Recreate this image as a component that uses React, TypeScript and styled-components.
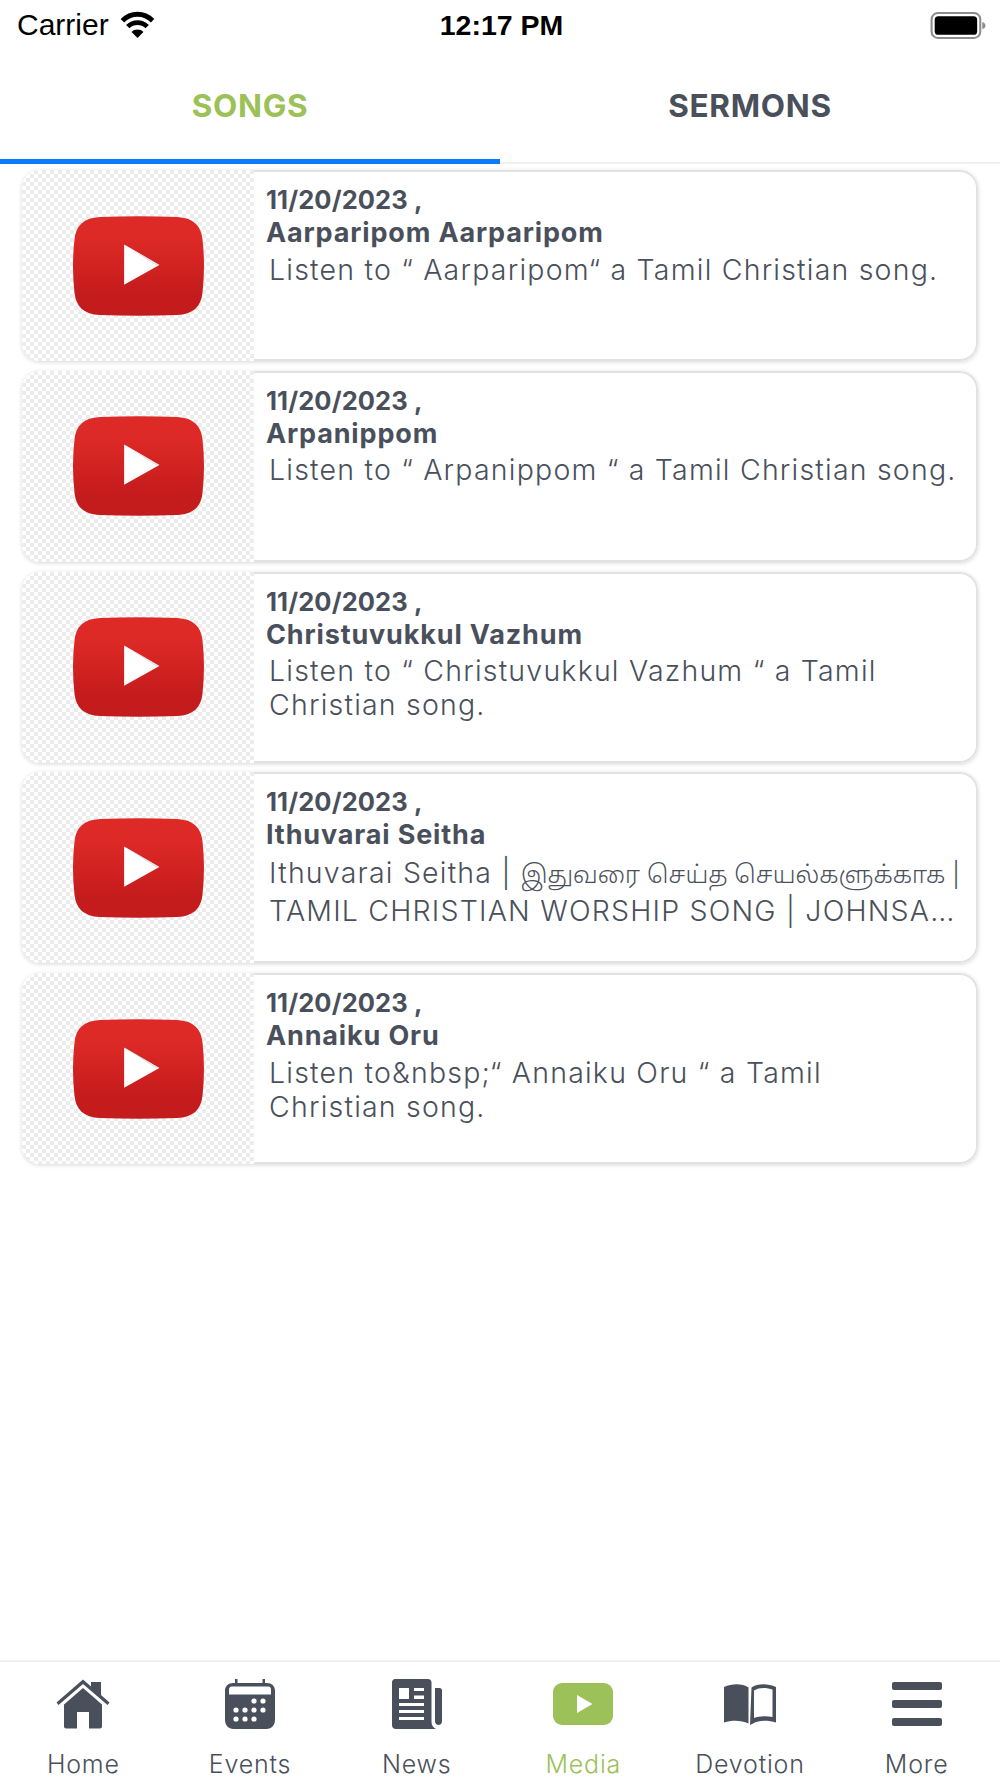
import React from "react";
import styled, { createGlobalStyle } from "styled-components";

const Global = createGlobalStyle`
  html, body { margin: 0; padding: 0; background: #fff; }
  * { box-sizing: border-box; }
`;
const FONT = `Inter, "Noto Sans", "Noto Sans Tamil", sans-serif`;
const INK = "#4a505b";
const GREEN = "#9bc158";

const Page = styled.div`
  width: 1000px; height: 1778px; display: flex; flex-direction: column; background: #fff; font-family: ${FONT}; color: ${INK}; overflow: hidden;
`;
const StatusBar = styled.div`
  height: 50px; flex: none; display: grid; grid-template-columns: 1fr auto 1fr; align-items: center; padding: 0 14px 0 17px; font-family: "Liberation Sans", Arial, sans-serif; color: #000; font-size: 30px;
`;
const Carrier = styled.div`display: flex; align-items: center; gap: 11px;`;
const Clock = styled.div`font-weight: 700; font-size: 28.500px; font-family: "Liberation Sans", Arial, sans-serif;`;
const BatteryWrap = styled.div`display: flex; justify-content: flex-end;`;

const Tabs = styled.div`
  height: 114px; flex: none; display: grid; grid-template-columns: 1fr 1fr; border-bottom: 2px solid #f0f0f0;
`;
const Tab = styled.div<{ $active?: boolean }>`
  display: flex; align-items: center; justify-content: center; padding-top: 2px; font-size: 31.500px; font-weight: 700; letter-spacing: .7px; height: 114px;
  color: ${p => (p.$active ? GREEN : INK)};
  border-bottom: 5px solid ${p => (p.$active ? "#0a7aff" : "transparent")};
`;
const List = styled.div`
  flex: 1; display: flex; flex-direction: column; gap: 9.750px; padding: 6px 22px 0 22px;
`;
const Card = styled.div`
  height: 191px; flex: none; display: flex; border-radius: 18px; background: #fff; overflow: hidden;
  box-shadow: 0 1px 4px rgba(0,0,0,.16);
`;
const Thumb = styled.div`
  width: 232px; flex: none; display: flex; align-items: center; justify-content: center;
  background-color: #fff;
  background-image: repeating-conic-gradient(#ececec 0% 25%, #fff 0% 50%);
  background-size: 8px 8px;
`;
const Body = styled.div`
  flex: 1; min-width: 0; padding: 11px 10px 0 12px; display: flex; flex-direction: column;
  border: 2px solid #e2e2e2; border-left: none; border-radius: 0 18px 18px 0;
`;
const DateLine = styled.div`font-size: 25.500px; font-weight: 700; line-height: 33px; letter-spacing: .1px; white-space: nowrap;`;
const Title = styled.div`font-size: 27px; font-weight: 700; line-height: 33px; letter-spacing: .85px; white-space: nowrap;`;
const Description = styled.div`
  font-size: 28.500px; font-weight: 300; line-height: 34px; letter-spacing: 1.200px; margin: 3.500px 0 0 3px; color: ${INK};
  display: -webkit-box; -webkit-line-clamp: 2; -webkit-box-orient: vertical; overflow: hidden;
`;
const Tamil = styled.span`font-size: 24.400px; letter-spacing: 0; line-height: 39px;`;
const KeepTogether = styled.span`white-space: nowrap;`;
const Nav = styled.div`
  height: 118px; flex: none; border-top: 2px solid #f0f0f0; display: grid; grid-template-columns: repeat(6, 1fr);
`;
const NavItem = styled.div<{ $active?: boolean }>`
  display: flex; flex-direction: column; align-items: center; color: ${p => (p.$active ? GREEN : INK)}; font-size: 25px; font-weight: 300; letter-spacing: .8px; line-height: 30px; white-space: nowrap;
`;
const NavIcon = styled.div`height: 66px; margin-top: 9px; margin-bottom: 12px; display: flex; align-items: center; justify-content: center;`;

const YouTube = () => (
  <svg width="133" height="100" viewBox="0 0 134 102" preserveAspectRatio="none">
    <defs>
      <linearGradient id="yt" x1="0" y1="0" x2="0" y2="1">
        <stop offset="0.2" stopColor="#de2a27" />
        <stop offset="0.8" stopColor="#c41b1c" />
      </linearGradient>
    </defs>
    <path d="M28 1C54 0 80 0 106 1C122 2 130 9 131.500 24C133.500 42 133.500 60 131.500 78C130 93 122 100 106 101C80 102 54 102 28 101C12 100 4 93 2.500 78C.5 60 .5 42 2.500 24C4 9 12 2 28 1Z" fill="url(#yt)" />
    <path d="M52.500 29L88 50L52.500 70Z" fill="#fff" />
    <path d="M52.500 29L88 50L84 50Z" fill="#e3e3e3" />
  </svg>
);
const Wifi = () => (
  <svg width="35" height="28" viewBox="0 0 32 26" fill="none" stroke="#000" strokeWidth="4.500">
    <path d="M2 9C10 1 22 1 30 9" />
    <path d="M7 14.500C12 9.500 20 9.500 25 14.500" />
    <path d="M16 25L10.500 19.500C13.500 16.500 18.500 16.500 21.500 19.500Z" fill="#000" stroke="none" />
  </svg>
);
const Battery = () => (
  <svg width="56" height="29" viewBox="0 0 54 28">
    <rect x="1.500" y="2" width="47" height="24" rx="6" fill="#fff" stroke="#8c8c8c" strokeWidth="2" />
    <rect x="4.500" y="5" width="41" height="18" rx="3.500" fill="#000" />
    <path d="M50.500 10.500C52.500 11 53.500 12.500 53.500 14C53.500 15.500 52.500 17 50.500 17.500Z" fill="#8c8c8c" />
  </svg>
);
const HomeIcon = () => (
  <svg width="54" height="50" viewBox="0 0 54 50" fill={INK}>
    <path d="M27 0.500L35 7.500V3H45V16L53.500 23.500L51.500 26L27 5L2.500 26L.5 23.500Z" />
    <path d="M27 9L46 25.500V47.500C46 48.800 45 49.500 44 49.500H33V33H21V49.500H10C9 49.500 8 48.800 8 47.500V25.500Z" />
  </svg>
);
const CalendarIcon = () => (
  <svg width="50" height="50" viewBox="0 0 50 50" fill={INK}>
    <path fillRule="evenodd" d="M10 0h2.500v4h25V0H40v4h2c4.500 0 8 3 8 7.500V41c0 5-3.500 9-8.500 9h-33C3.500 50 0 46 0 41V11.500C0 7 3.500 4 8 4h2ZM7 7.500C4.500 7.500 4 9 4 11v4.500h42V11c0-2-.5-3.500-3-3.500Z" />
    <g fill="#fff">
      <circle cx="29" cy="22" r="2.600" /><circle cx="38" cy="22" r="2.600" />
      <circle cx="11" cy="31" r="2.600" /><circle cx="20" cy="31" r="2.600" /><circle cx="29" cy="31" r="2.600" /><circle cx="38" cy="31" r="2.600" />
      <circle cx="11" cy="40" r="2.600" /><circle cx="20" cy="40" r="2.600" /><circle cx="29" cy="40" r="2.600" />
    </g>
  </svg>
);
const NewsIcon = () => (
  <svg width="50" height="50" viewBox="0 0 50 50" fill={INK}>
    <path fillRule="evenodd" d="M3 0H36C38 0 39.500 1.500 39.500 3.500V43C39.500 46 41 48.500 44 50H4C1.500 50 0 48.500 0 46V3C0 1.500 1.500 0 3 0ZM7 9V20H17V9ZM22 9V12H32V9ZM22 16.500V20H32V16.500ZM7 24V27H32V24ZM7 31V34H32V31ZM7 38V41H32V38Z" />
    <path d="M43 9H47.500C49 9 50 10 50 11.500V42C50 44.500 48.500 46 46.500 46C44.500 46 43 44.500 43 42Z" />
  </svg>
);
const MediaIcon = () => (
  <svg width="60" height="42" viewBox="0 0 60 42">
    <rect width="60" height="42" rx="9" fill={GREEN} />
    <path d="M24 12L39.500 21L24 30Z" fill="#fff" />
  </svg>
);
const BookIcon = () => (
  <svg width="52" height="42" viewBox="0 0 52 42" fill={INK}>
    <path fillRule="evenodd" d="M24.500 4.500V40.500C17 37 8 37 0 39.500V4C8 0.500 18 0 24.500 4.500ZM27.500 4.500C34 0 44 0.500 52 4V39.500C44 37 35 37 29 40.500L26 42ZM30 7.500V35C35 33 42 32.500 48.500 34V6.500C43 4.500 35 4 30 7.500Z" />
  </svg>
);
const MenuIcon = () => (
  <svg width="50" height="44" viewBox="0 0 50 44" fill={INK}>
    <rect width="50" height="8" rx="2" y="0" /><rect width="50" height="8" rx="2" y="18" /><rect width="50" height="8" rx="2" y="36" />
  </svg>
);

const songs: [string, React.ReactNode][] = [
  ["Aarparipom Aarparipom", "Listen to “ Aarparipom“ a Tamil Christian song."],
  ["Arpanippom", "Listen to “ Arpanippom “ a Tamil Christian song."],
  ["Christuvukkul Vazhum", "Listen to “ Christuvukkul Vazhum “ a Tamil Christian song."],
  ["Ithuvarai Seitha", <>Ithuvarai Seitha | <Tamil>இதுவரை செய்த செயல்களுக்காக |</Tamil> TAMIL CHRISTIAN WORSHIP SONG | JOHNSAM JOYSON | FGPC NAGERCOIL</>],
  ["Annaiku Oru", <>Listen to&amp;nbsp;“ Annaiku Oru “ a Tamil <KeepTogether>Christian song.</KeepTogether></>],
];
const navItems = [
  { label: "Home", icon: <HomeIcon /> },
  { label: "Events", icon: <CalendarIcon /> },
  { label: "News", icon: <NewsIcon /> },
  { label: "Media", icon: <MediaIcon />, active: true },
  { label: "Devotion", icon: <BookIcon /> },
  { label: "More", icon: <MenuIcon /> },
];

export default function App() {
  return (
    <Page>
      <Global />
      <StatusBar>
        <Carrier>Carrier <Wifi /></Carrier>
        <Clock>12:17 PM</Clock>
        <BatteryWrap><Battery /></BatteryWrap>
      </StatusBar>
      <Tabs>
        <Tab $active>SONGS</Tab>
        <Tab>SERMONS</Tab>
      </Tabs>
      <List>
        {songs.map(([title, desc]) => (
          <Card key={title}>
            <Thumb><YouTube /></Thumb>
            <Body>
              <DateLine>11/20/2023 ,</DateLine>
              <Title>{title}</Title>
              <Description>{desc}</Description>
            </Body>
          </Card>
        ))}
      </List>
      <Nav>
        {navItems.map(n => (
          <NavItem key={n.label} $active={n.active}>
            <NavIcon>{n.icon}</NavIcon>
            {n.label}
          </NavItem>
        ))}
      </Nav>
    </Page>
  );
}
